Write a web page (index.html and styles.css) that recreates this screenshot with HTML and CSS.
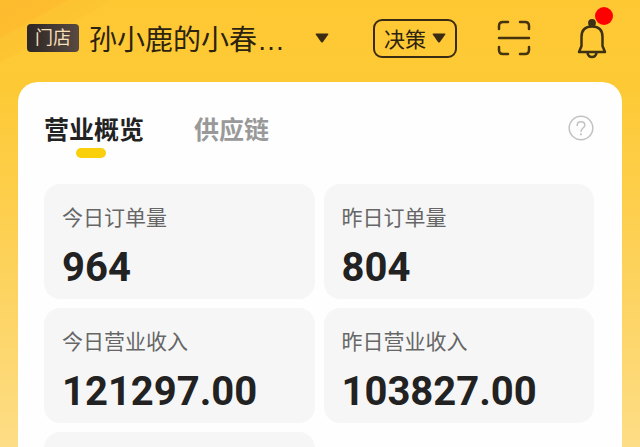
FILE: index.html
```html
<!DOCTYPE html>
<html lang="zh-CN">
<head>
<meta charset="utf-8">
<meta name="viewport" content="width=device-width, initial-scale=1">
<title>营业概览</title>
<link rel="stylesheet" href="styles.css">
</head>
<body>
<header class="topbar">
  <span class="badge">门店</span>
  <button class="store" type="button">
    <span class="store-name">孙小鹿的小春…</span>
    <svg class="caret" viewBox="0 0 14 10" aria-hidden="true"><path d="M1.500.5h11q1.500 0 .6 1.300L8 9q-1 1.200-2 0L.9 1.800Q0 .5 1.500.5z"/></svg>
  </button>
  <button class="role" type="button">
    <span>决策</span>
    <svg class="caret" viewBox="0 0 14 10" aria-hidden="true"><path d="M1.500.5h11q1.500 0 .6 1.300L8 9q-1 1.200-2 0L.9 1.800Q0 .5 1.500.5z"/></svg>
  </button>
  <button class="scan" type="button" aria-label="扫一扫">
    <svg viewBox="0 0 34 36" aria-hidden="true"><path d="M2 9V6q0-4 4-4h5M23 2h5q4 0 4 4v3M2 18h30M2 27v3q0 4 4 4h5M23 34h5q4 0 4-4v-3"/></svg>
  </button>
  <button class="bell" type="button" aria-label="消息">
    <svg viewBox="0 0 32 42" aria-hidden="true"><circle class="solid" cx="16" cy="6" r="3.900"/><path d="M5.500 29V20Q5.500 9.500 16 9.500T26.500 20v9l2.500 6H3zM11.500 36q.8 4 4.500 4t4.500-4"/></svg>
    <span class="dot"></span>
  </button>
</header>
<main class="panel">
  <nav class="tabs">
    <a class="tab active" href="#overview">营业概览</a>
    <a class="tab" href="#supply">供应链</a>
    <button class="help" type="button" aria-label="帮助">
      <svg viewBox="0 0 26 26" aria-hidden="true"><circle cx="13" cy="13" r="11.800"/><path d="M9.200 10.500c0-2.300 1.600-3.700 3.800-3.700s3.800 1.400 3.800 3.400c0 2.800-3.800 2.900-3.800 6.300"/><circle class="point" cx="13" cy="19.300" r="1.100"/></svg>
    </button>
  </nav>
  <section class="stats" id="overview">
    <article class="stat"><h2>今日订单量</h2><p>964</p></article>
    <article class="stat"><h2>昨日订单量</h2><p>804</p></article>
    <article class="stat"><h2>今日营业收入</h2><p>121297.00</p></article>
    <article class="stat"><h2>昨日营业收入</h2><p>103827.00</p></article>
    <article class="stat"></article>
  </section>
</main>
</body>
</html>
```
FILE: styles.css
```css
* {
  box-sizing: border-box;
}

html {
  height: 100%;
  overflow: hidden;
}

body {
  display: flex;
  flex-direction: column;
  height: 100%;
  margin: 0;
  overflow: hidden;
  font-family: "Liberation Sans", "Noto Sans CJK SC", sans-serif;
  color: #2c230f;
  background:
    linear-gradient(151deg, #fdbb2e 0, #fdbd2f 32px, #fdc331 34px, #fdc532 54px, transparent 56px),
    linear-gradient(#fec833 0, #fdca36 90px, #fdce4b 200px, #fddd86 100%);
}

button {
  display: flex;
  align-items: center;
  padding: 0;
  border: 0;
  background: none;
  font: inherit;
  color: inherit;
}

svg {
  display: block;
  fill: none;
  stroke: currentColor;
  stroke-linecap: round;
  stroke-linejoin: round;
}

.topbar {
  display: flex;
  flex: none;
  align-items: center;
  height: 82px;
  padding: 0 32px 6px 27px;
}

.badge {
  padding: 0 8px;
  border-radius: 4px;
  font-size: 18px;
  line-height: 28px;
  color: #f6dfb9;
  background: linear-gradient(90deg, #2c2625, #594a42);
}

.store {
  flex: 1;
  gap: 30px;
  margin-left: 10px;
}

.store-name {
  padding-top: 6px;
  font-size: 28px;
  line-height: 40px;
  white-space: nowrap;
}

.caret {
  width: 14px;
  height: 10px;
  fill: #3a2c12;
  stroke: none;
}

.role {
  gap: 6px;
  height: 39px;
  padding: 0 9px;
  border: 2px solid #3a2c12;
  border-radius: 9px;
  font-size: 21px;
}

.scan {
  margin-left: 40px;
  color: #46340f;
}

.scan svg {
  width: 34px;
  height: 36px;
  stroke-width: 2.5;
}

.bell {
  position: relative;
  margin-left: 45px;
  color: #3e3013;
}

.bell svg {
  width: 32px;
  height: 42px;
  stroke-width: 2.5;
}

.bell .solid {
  fill: currentColor;
  stroke: none;
}

.dot {
  position: absolute;
  top: -10px;
  right: -5px;
  width: 18px;
  height: 18px;
  border-radius: 50%;
  background: #fe0000;
}

.panel {
  flex: 1 0 auto;
  margin: 0 18px;
  padding: 30px 28px 0 26px;
  border-radius: 20px 20px 0 0;
  background: #fefefe;
}

.tabs {
  display: flex;
  align-items: flex-start;
  gap: 50px;
  height: 72px;
}

.tab {
  display: flex;
  flex-direction: column;
  align-items: center;
  font-size: 25px;
  font-weight: 700;
  line-height: 36px;
  color: #999;
  text-decoration: none;
}

.active {
  color: #222;
}

.active::after {
  content: "";
  width: 30px;
  height: 10px;
  margin-right: 6px;
  border-radius: 5px;
  background: #fad00c;
}

.help {
  margin: 3px 0 0 auto;
  color: #c2c2c2;
}

.help svg {
  width: 26px;
  height: 26px;
  stroke-width: 1.5;
}

.help .point {
  fill: currentColor;
  stroke: none;
}

.stats {
  display: grid;
  grid-template-columns: 1fr 1fr;
  gap: 9px;
}

.stat {
  height: 115px;
  padding: 18px;
  border-radius: 16px;
  background: #f6f6f6;
}

.stat h2 {
  margin: 0;
  font-size: 21px;
  font-weight: 400;
  line-height: 32px;
  color: #666;
}

.stat p {
  margin: 10px 0 0;
  font-family: Roboto, sans-serif;
  font-size: 40px;
  font-weight: 700;
  line-height: 48px;
  color: #222;
}
```
